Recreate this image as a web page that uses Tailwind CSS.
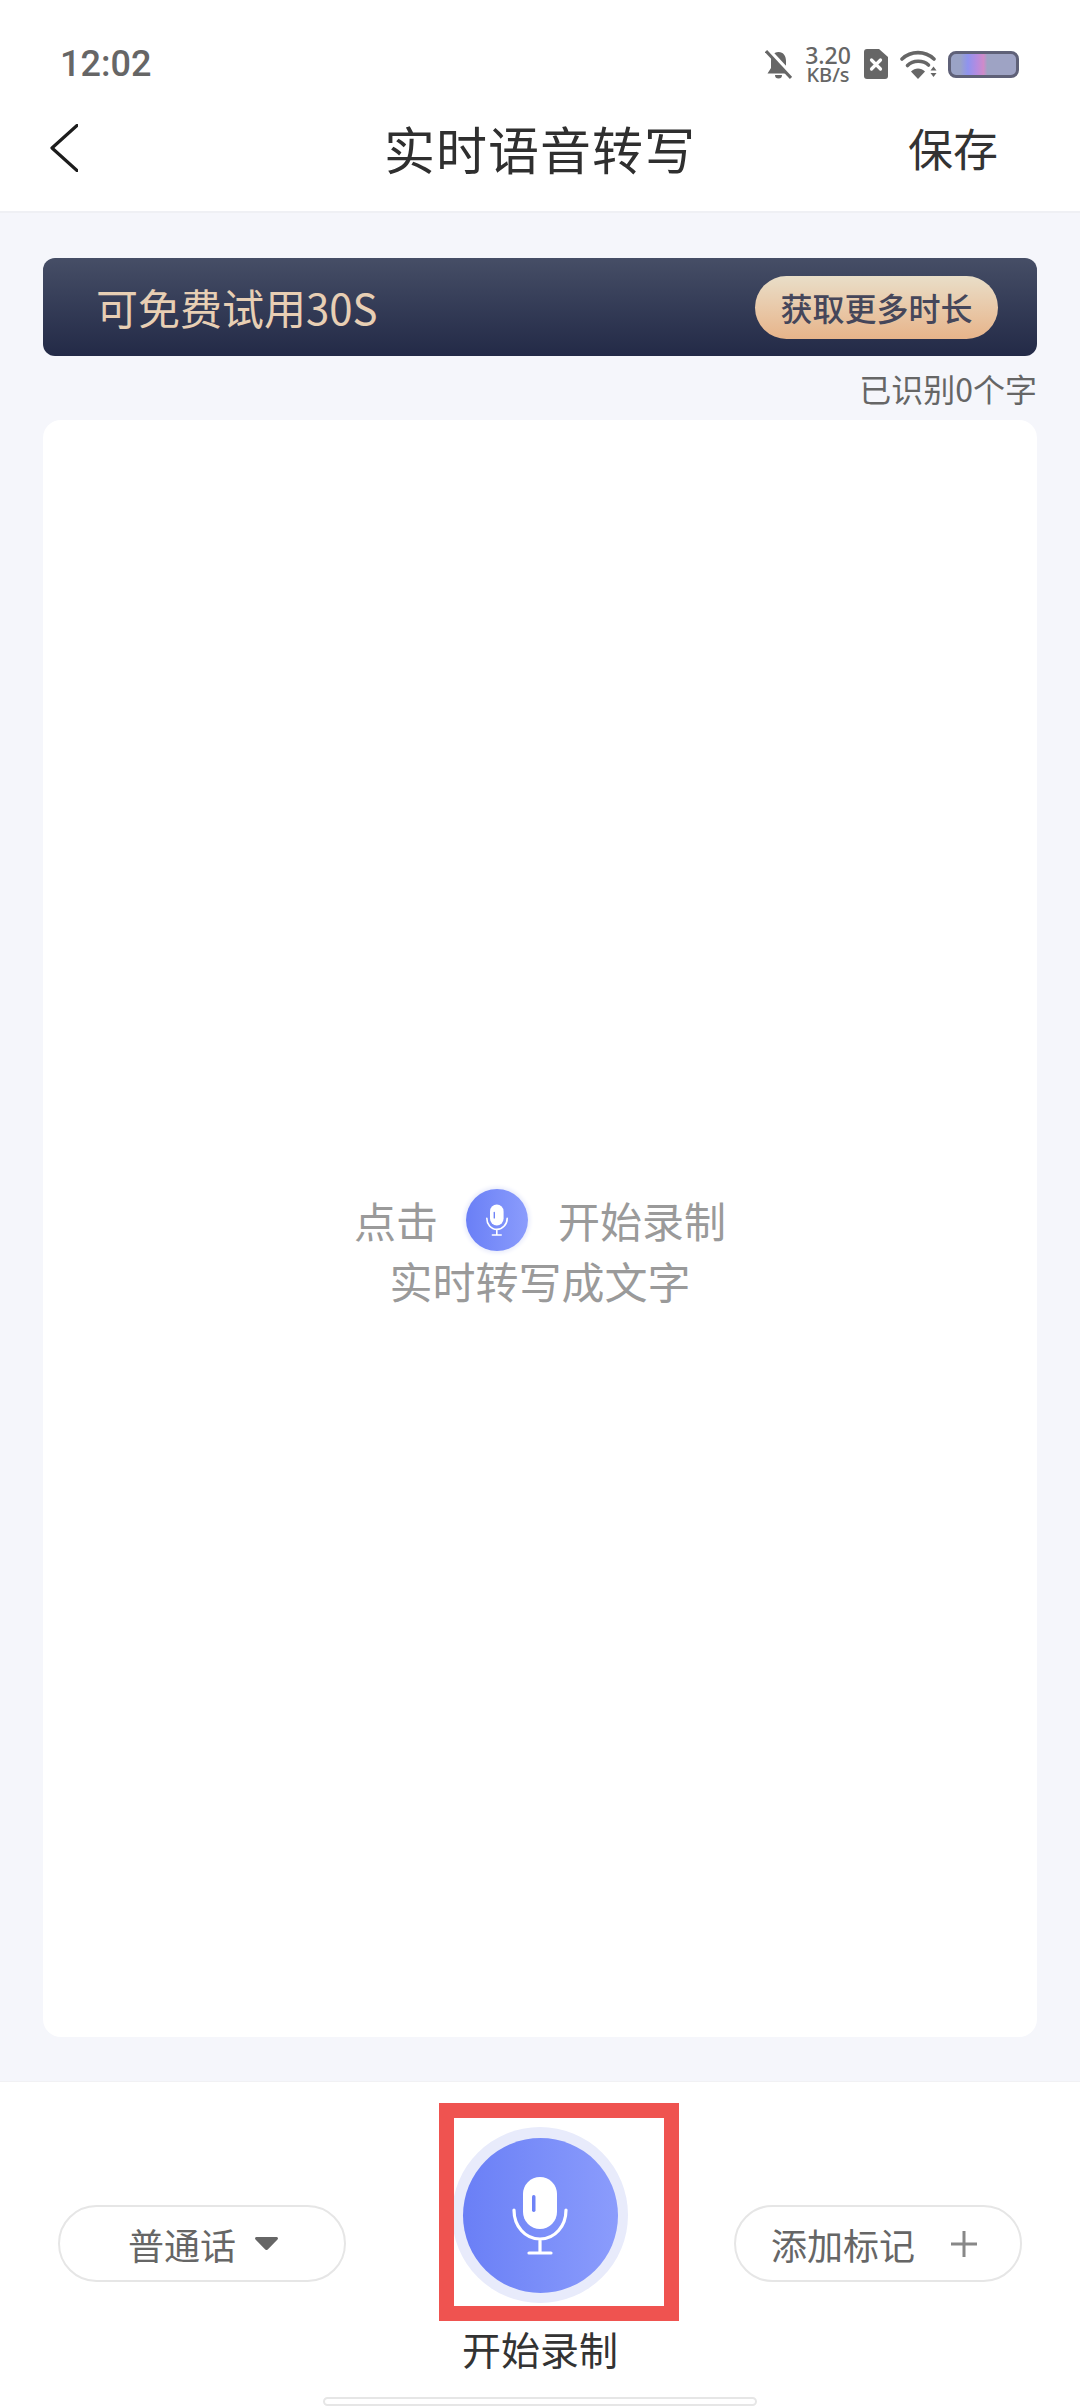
<!DOCTYPE html>
<html lang="zh-CN">
<head>
<meta charset="utf-8">
<title>实时语音转写</title>
<script src="https://cdn.jsdelivr.net/npm/@tailwindcss/browser@4"></script>
</head>
<body class="m-0">
<div class="relative flex flex-col w-[1080px] h-[2408px] overflow-hidden bg-[#f5f6fb] font-['Noto_Sans_CJK_SC','Noto_Sans',sans-serif] text-[#333]">

  <!-- header -->
  <header class="shrink-0 h-[213px] bg-white border-b-2 border-[#eff0f4] flex flex-col">
    <div class="h-[100px] pt-[46px] pl-[60px] pr-[61px] flex items-start justify-between">
      <span class="font-['Roboto'] font-medium text-[36px] leading-[36px] text-[#666]">12:02</span>
      <div class="flex items-center h-[36px]">
        <svg class="w-[27px] h-[29px]" viewBox="0 0 27 29" fill="#666">
          <path d="M13.5 2C8.5 2 6 6 6 11v7l-3.500 5.500h22L21 18v-7c0-5-2.500-9-7.500-9z"/>
          <path d="M10 25a3.500 3.500 0 0 0 7 0z"/>
          <path d="M3 0L27 26" stroke="#fff" stroke-width="5"/>
          <path d="M1 1L26 28" stroke="#666" stroke-width="3"/>
        </svg>
        <div class="ml-[12px] w-[48px] flex flex-col items-center font-['Noto_Sans'] font-medium text-[#666]">
          <span class="text-[23px] leading-[20px]">3.20</span>
          <span class="text-[20px] leading-[19px]">KB/s</span>
        </div>
        <svg class="ml-[12px] w-[24px] h-[30px]" viewBox="0 0 24 30">
          <path d="M3 0h12l9 8v19a3 3 0 0 1-3 3H3a3 3 0 0 1-3-3V3a3 3 0 0 1 3-3z" fill="#666"/>
          <path d="M7.500 11l9 9M16.500 11l-9 9" stroke="#fff" stroke-width="3.200" stroke-linecap="round"/>
        </svg>
        <svg class="ml-[12px] w-[37px] h-[29px]" viewBox="0 0 37 29" fill="none">
          <path d="M2 9C11 0.500 25 0.500 34 9" stroke="#666" stroke-width="3.600" stroke-linecap="round"/>
          <path d="M7.500 15.500C13 10 23 10 28.500 15" stroke="#666" stroke-width="3.600" stroke-linecap="round"/>
          <path d="M11 21.500C15 17.500 21 17.500 25 21.500L18 29z" fill="#666"/>
          <path d="M30.500 20.500L33.500 16.500L36.500 20.500zM30.500 23L33.500 27L36.500 23z" fill="#666"/>
        </svg>
        <div class="ml-[11px] w-[71px] h-[27px] rounded-[8px] border-[3px] border-[#5f6178] bg-[linear-gradient(90deg,#9aa3c6_0%,#9aa3c6_14%,#8f93ef_26%,#b68bdf_40%,#cf8bc9_50%,#9ea3c4_56%,#9ea3c4_100%)]"></div>
      </div>
    </div>
    <div class="grid grid-cols-[1fr_auto_1fr] items-center h-[96px] px-[82px]">
      <svg class="ml-[-32px] w-[28px] h-[48px]" viewBox="0 0 28 48" fill="none">
        <path d="M27 1.500L2 24L27 46.500" stroke="#1c1c1c" stroke-width="3.200" stroke-linecap="round" stroke-linejoin="round"/>
      </svg>
      <h1 class="m-0 font-normal text-[51px] leading-[60px] tracking-[1px] text-[#2f2f2f]">实时语音转写</h1>
      <span class="justify-self-end text-[45px] leading-[60px] text-[#333]">保存</span>
    </div>
  </header>

  <!-- content -->
  <main class="flex-1 min-h-0 flex flex-col px-[43px] pt-[45px] pb-[44px]">
    <div class="shrink-0 h-[98px] rounded-[12px] bg-linear-to-b from-[#464e66] to-[#232a47] flex items-center justify-between pl-[53px] pr-[39px]">
      <span class="text-[42px] leading-[50px] text-[#e8cfb4]">可免费试用30S</span>
      <span class="w-[243px] h-[63px] rounded-full bg-linear-to-b from-[#e9dec8] to-[#e7b48a] text-[32px] leading-[63px] text-center font-medium text-[#45465a]">获取更多时长</span>
    </div>
    <div class="shrink-0 h-[64px] pt-[12px] text-right text-[32px] leading-[40px] text-[#666]">已识别0个字</div>
    <section class="flex-1 min-h-0 rounded-[18px] bg-white flex flex-col items-center justify-center pt-[42px] text-[43px] leading-[60px] text-[#9a9a9a]">
      <div class="flex items-center h-[62px] mb-[-1px] text-[42px]">
        <span>点击</span>
        <span class="ml-[28px] w-[62px] h-[62px] rounded-full bg-linear-to-r from-[#6a7ff6] to-[#8b9cfc] shadow-[0_0_4px_2px_#e8ebfb]">
          <svg class="w-[62px] h-[62px]" viewBox="0 0 155 155" fill="none">
            <rect x="60" y="39" width="34" height="52" rx="17" fill="#fff"/>
            <rect x="69" y="57" width="3.500" height="17" rx="1.700" fill="#6f83f7"/>
            <path d="M52 73C52 88 62 101 77 101C92 101 103 88 103 73M77 101V114M66 115H88" stroke="#fff" stroke-width="4" stroke-linecap="round"/>
          </svg>
        </span>
        <span class="ml-[30px]">开始录制</span>
      </div>
      <div>实时转写成文字</div>
    </section>
  </main>

  <!-- bottom panel -->
  <footer class="shrink-0 h-[327px] bg-white border-t border-[#f1f1f4] pt-[45px] px-[58px] flex justify-between items-start">
    <div class="mt-[78px] w-[288px] h-[77px] rounded-full border-2 border-[#e6e6e6] flex items-center text-[36px] leading-[44px] text-[#666] pl-[68px]">
      <span>普通话</span>
      <svg class="ml-[19px] w-[23px] h-[13px]" viewBox="0 0 23 13"><path d="M1.500 0h20a1.400 1.400 0 0 1 1 2.400l-9.500 9.800a2 2 0 0 1-3 0L.500 2.400A1.400 1.400 0 0 1 1.500 0z" fill="#666"/></svg>
    </div>
    <div class="flex flex-col items-center">
      <button class="w-[176px] h-[176px] rounded-full bg-[#e8ebfb] flex items-center justify-center">
        <span class="w-[155px] h-[155px] rounded-full bg-linear-to-r from-[#6a7ff6] to-[#8b9cfc]">
          <svg class="w-[155px] h-[155px]" viewBox="0 0 155 155" fill="none">
            <rect x="60" y="39" width="34" height="52" rx="17" fill="#fff"/>
            <rect x="69" y="57" width="3.500" height="17" rx="1.700" fill="#6f83f7"/>
            <path d="M51 72C51 88 62 101 77 101C92 101 103 88 103 72M77 101V114M66 115H88" stroke="#fff" stroke-width="3.200" stroke-linecap="round"/>
          </svg>
        </span>
      </button>
      <span class="mt-[21px] text-[39px] leading-[48px] text-[#333]">开始录制</span>
    </div>
    <div class="mt-[78px] w-[288px] h-[77px] rounded-full border-2 border-[#e6e6e6] flex items-center text-[36px] leading-[44px] text-[#666] pl-[35px]">
      <span>添加标记</span>
      <svg class="ml-[36px] w-[26px] h-[26px]" viewBox="0 0 26 26"><path d="M0 13H26M13 0V26" stroke="#888" stroke-width="3"/></svg>
    </div>
  </footer>

  <!-- home indicator -->
  <div class="absolute left-[323px] top-[2397px] w-[434px] h-[9px] rounded-full bg-white border-2 border-[#e6e6e6]"></div>
  <!-- annotation rectangle -->
  <div class="absolute left-[439px] top-[2103px] w-[240px] h-[218px] border-[15px] border-[#ef5350]"></div>
</div>
</body>
</html>
